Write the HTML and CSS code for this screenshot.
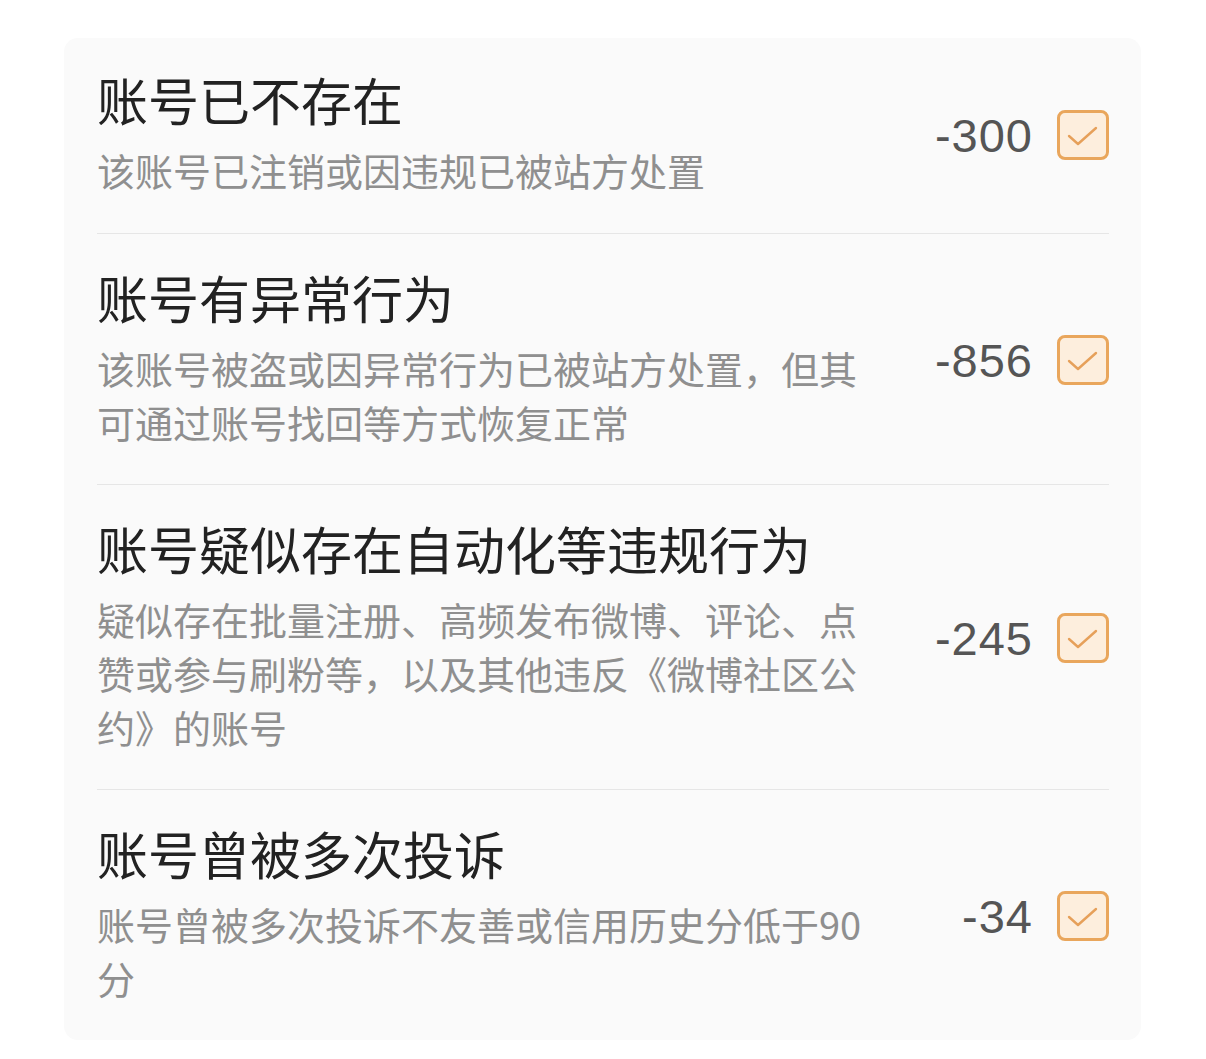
FILE: index.html
```html
<!DOCTYPE html>
<html lang="zh-CN">
<head>
	<meta charset="UTF-8">
	<title>账号信用</title>
	<link rel="stylesheet" href="styles.css">
</head>
<body>
	<div class="card">
		<div class="row first">
			<div class="info">
				<div class="title">账号已不存在</div>
				<div class="desc">该账号已注销或因违规已被站方处置</div>
			</div>
			<div class="score">-300</div>
			<div class="check"><svg viewBox="0 0 46 44" width="46" height="44"><path d="M9 23 L18 31 L36 15" fill="none" stroke="#e6a05a" stroke-width="2.4" stroke-linecap="round" stroke-linejoin="round"/></svg></div>
		</div>
		<div class="row">
			<div class="info">
				<div class="title">账号有异常行为</div>
				<div class="desc">该账号被盗或因异常行为已被站方处置，但其可通过账号找回等方式恢复正常</div>
			</div>
			<div class="score">-856</div>
			<div class="check"><svg viewBox="0 0 46 44" width="46" height="44"><path d="M9 23 L18 31 L36 15" fill="none" stroke="#e6a05a" stroke-width="2.4" stroke-linecap="round" stroke-linejoin="round"/></svg></div>
		</div>
		<div class="row">
			<div class="info">
				<div class="title">账号疑似存在自动化等违规行为</div>
				<div class="desc">疑似存在批量注册、高频发布微博、评论、点赞或参与刷粉等，以及其他违反《微博社区公约》的账号</div>
			</div>
			<div class="score">-245</div>
			<div class="check"><svg viewBox="0 0 46 44" width="46" height="44"><path d="M9 23 L18 31 L36 15" fill="none" stroke="#e6a05a" stroke-width="2.4" stroke-linecap="round" stroke-linejoin="round"/></svg></div>
		</div>
		<div class="row last">
			<div class="info">
				<div class="title">账号曾被多次投诉</div>
				<div class="desc">账号曾被多次投诉不友善或信用历史分低于90分</div>
			</div>
			<div class="score">-34</div>
			<div class="check"><svg viewBox="0 0 46 44" width="46" height="44"><path d="M9 23 L18 31 L36 15" fill="none" stroke="#e6a05a" stroke-width="2.4" stroke-linecap="round" stroke-linejoin="round"/></svg></div>
		</div>
	</div>
</body>
</html>
```

FILE: styles.css
```css
* {
	margin: 0;
	padding: 0;
	box-sizing: border-box;
}
body {
	background: #fff;
	padding: 38px 65px 0 64px;
	font-family: "Noto Sans CJK SC", "Noto Sans", sans-serif;
}
.card {
	background: #fafafa;
	border-radius: 14px;
	padding: 0 32px 0 33px;
	height: 1002px;
}
.row {
	display: flex;
	align-items: center;
	padding: 33px 0 35px;
	border-bottom: 1px solid #e6e6e6;
}
.row.first {
	padding-top: 31px;
	padding-bottom: 36px;
}
.row.last {
	border-bottom: none;
	padding-bottom: 33px;
}
.info {
	width: 780px;
}
.title {
	font-size: 51px;
	line-height: 60px;
	color: #222;
	margin-bottom: 14px;
}
.desc {
	font-size: 38px;
	line-height: 54px;
	color: #8f8f8f;
}
.score {
	flex: 1;
	text-align: right;
	font-family: "Liberation Sans", Arial, sans-serif;
	font-size: 47px;
	letter-spacing: 1px;
	color: #555;
	padding-right: 24px;
	margin-top: 4px;
}
.check {
	width: 52px;
	height: 50px;
	border: 3px solid #e9a65c;
	border-radius: 8px;
	background: #fdeedd;
	flex-shrink: 0;
	margin-top: 4px;
}
.check svg {
	display: block;
}
```
